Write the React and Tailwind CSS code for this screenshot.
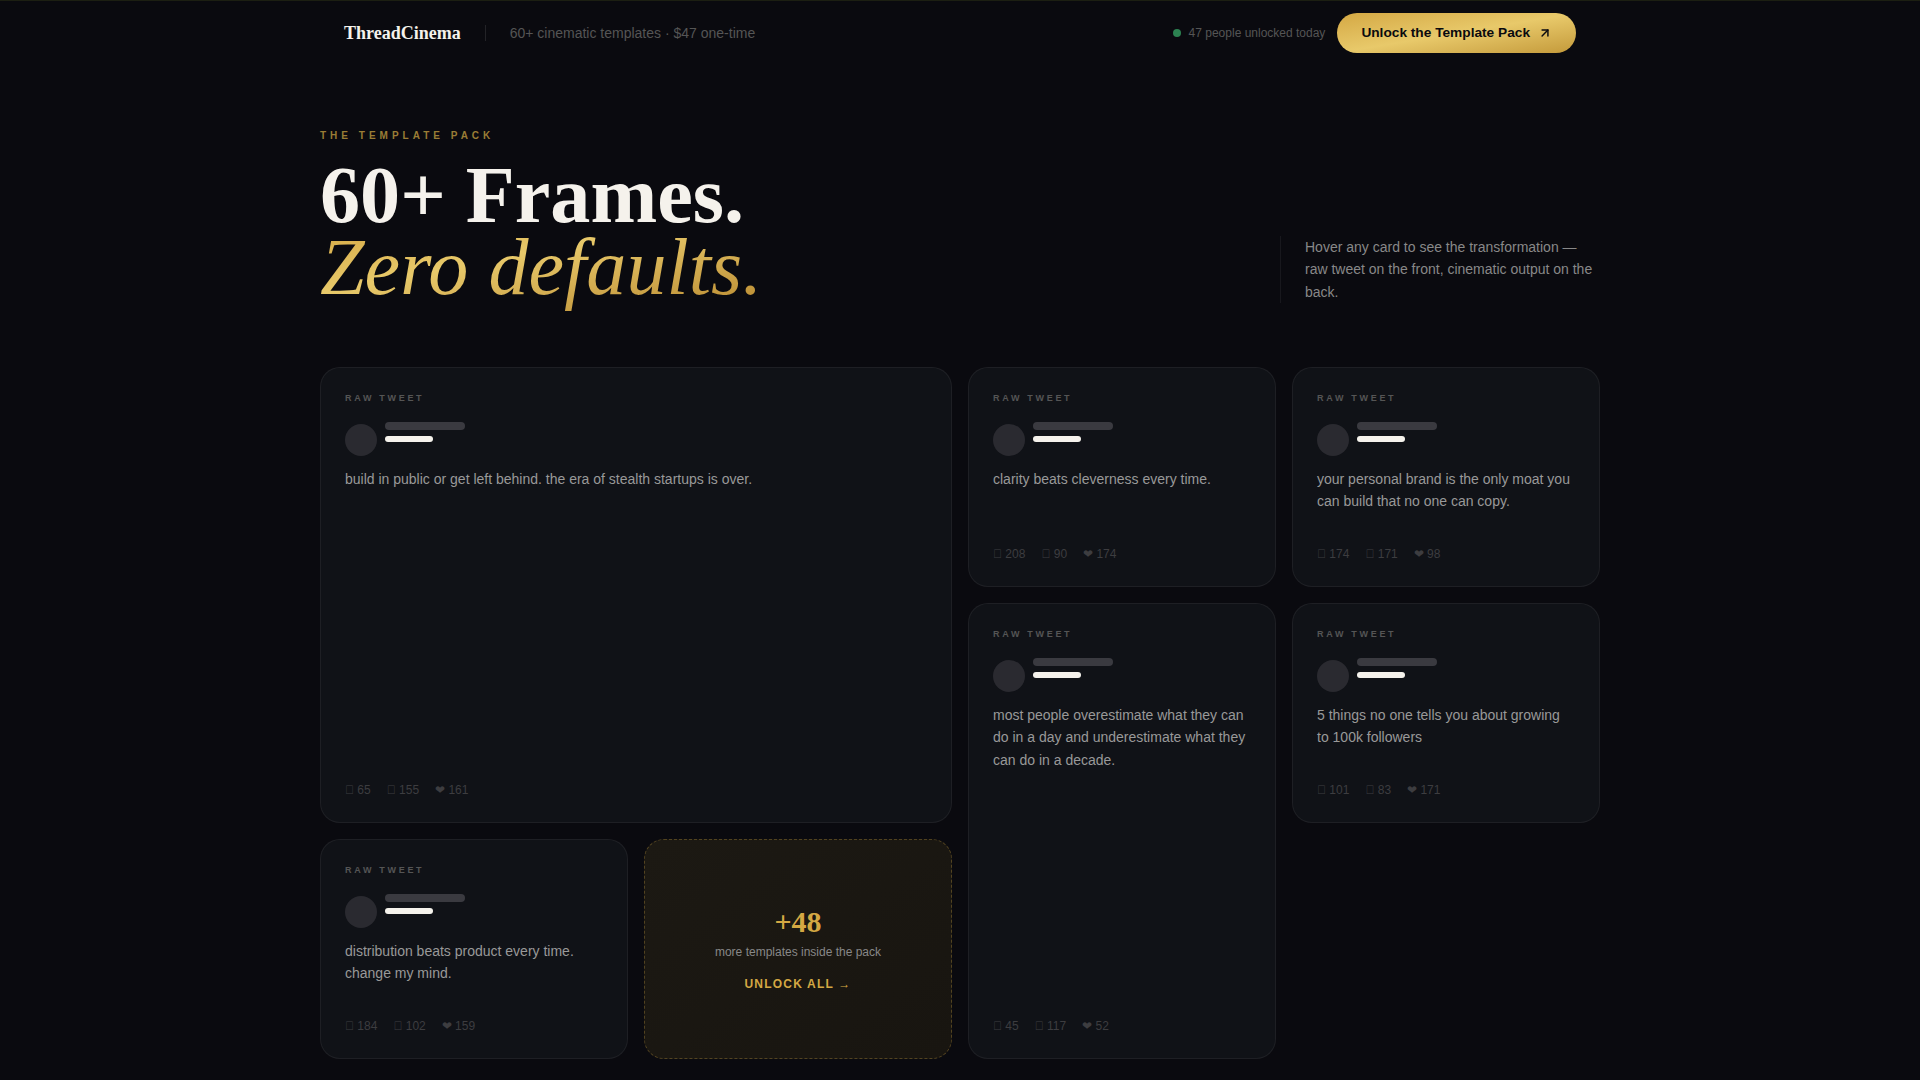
import { ArrowUpRight } from "lucide-react";

const serif = "font-['Liberation_Serif',serif]";

const Card = ({ text, stats, className = "" }) => (
  <div className={`flex flex-col rounded-[20px] border border-white/[0.06] bg-[#101217] p-6 ${className}`}>
    <div className="mb-[18px] text-[9px] leading-[12px] font-bold tracking-[0.3em] text-[#555]">RAW TWEET</div>
    <div className="mb-3 flex items-start gap-2">
      <div className="mt-[2px] h-8 w-8 rounded-full bg-[#2a2a30]" />
      <div className="flex flex-col gap-[6px]">
        <div className="h-2 w-20 rounded bg-[#3a3a40]" />
        <div className="h-[6px] w-12 rounded bg-[#f5f2ec]" />
      </div>
    </div>
    <p className="text-[14px] leading-[1.6] text-[#999]">{text}</p>
    <div className="mt-auto flex gap-4 text-[12px] leading-[16px] text-[#3d3d40]">
      <span>{"\uE000"} {stats[0]}</span>
      <span>{"\uE000"} {stats[1]}</span>
      <span>❤ {stats[2]}</span>
    </div>
  </div>
);

const App = () => {
  return (
    <div className="min-h-screen border-t border-[#1c1f12] bg-[#0a0a0f] font-['Liberation_Sans',sans-serif]">
      <nav className="mx-auto flex h-[64px] max-w-[1280px] items-center justify-between px-6">
        <div className="flex items-center">
          <span className={`${serif} text-[18px] font-bold text-[#f5f2ec]`}>ThreadCinema</span>
          <div className="mx-6 h-4 w-px bg-white/10" />
          <span className="text-[14px] text-[#555]">60+ cinematic templates · $47 one-time</span>
        </div>
        <div className="flex items-center">
          <div className="mr-2 h-2 w-2 rounded-full bg-[#34a061]/80" />
          <span className="mr-3 text-[12px] text-[#555]">47 people unlocked today</span>
          <button className="flex h-[39.5px] items-center gap-2 rounded-full bg-linear-to-br from-[#d4a843] via-[#e8c96a] to-[#c49a3a] px-6 text-[13.7px] font-bold text-[#0a0a0f]">
            Unlock the Template Pack
            <ArrowUpRight size={14} strokeWidth={2.5} />
          </button>
        </div>
      </nav>

      <main className="mx-auto max-w-[1280px]">
        <section className="flex items-end justify-between pt-[63px] pb-[64px]">
          <div>
            <div className="mb-4 text-[10px] leading-[15px] font-bold tracking-[0.4em] text-[#9a7d35]">THE TEMPLATE PACK</div>
            <h1 className={`${serif} text-[80.15px] leading-[72px] font-bold text-[#f5f2ec]`}>
              60+ Frames.
              <br />
              <span className="bg-linear-to-br from-[#d4a843] via-[#e8c96a] via-40% to-[#b8892e] bg-clip-text font-normal text-transparent italic">Zero defaults.</span>
            </h1>
          </div>
          <p className="w-[320px] border-l border-white/[0.06] pl-6 text-[14px] leading-[1.6] text-[#888]">
            Hover any card to see the transformation — raw tweet on the front, cinematic output on the back.
          </p>
        </section>

        <div className="grid grid-cols-4 grid-rows-[220px_220px_220px] gap-4">
          <Card className="col-span-2 row-span-2" text="build in public or get left behind. the era of stealth startups is over." stats={[65, 155, 161]} />
          <Card text="clarity beats cleverness every time." stats={[208, 90, 174]} />
          <Card text="your personal brand is the only moat you can build that no one can copy." stats={[174, 171, 98]} />
          <Card className="row-span-2" text="most people overestimate what they can do in a day and underestimate what they can do in a decade." stats={[45, 117, 52]} />
          <Card text="5 things no one tells you about growing to 100k followers" stats={[101, 83, 171]} />
          <Card className="col-start-1" text="distribution beats product every time. change my mind." stats={[184, 102, 159]} />
          <div className="col-start-2 row-start-3 flex flex-col items-center justify-center rounded-[20px] border border-dashed border-[#d4a843]/30 bg-linear-to-br from-[#1c1913] to-[#181510] pt-[2px]">
            <div className={`${serif} text-[30px] leading-[30px] font-bold text-[#d4a843]`}>+48</div>
            <div className="mt-[6px] text-[12px] leading-[18px] text-[#888]">more templates inside the pack</div>
            <div className="mt-[14px] text-[12px] leading-[18px] font-bold tracking-[0.1em] text-[#d4a843]">UNLOCK ALL →</div>
          </div>
        </div>
      </main>
    </div>
  );
};

export default App;
